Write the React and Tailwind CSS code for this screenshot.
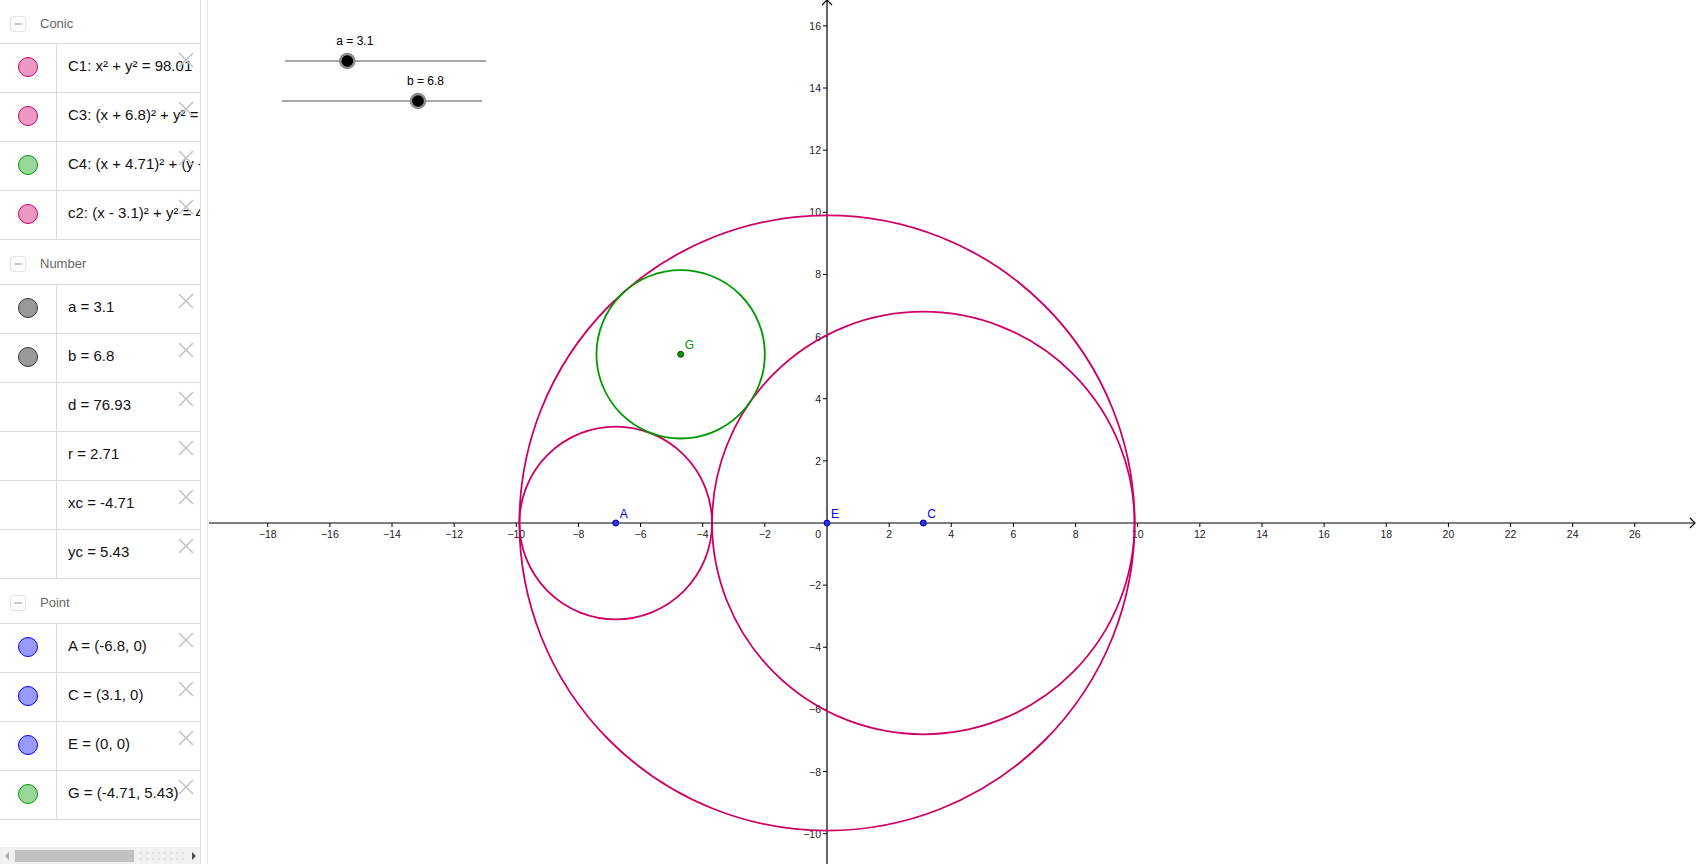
import React from 'react';

// graphics view scale: one unit = 31.07px, origin in page pixels
const U = 31.07;
const OX = 827;
const OY = 523;
const px = (x) => OX + x * U;
const py = (y) => OY - y * U;

const PINK = '#cc0066';
const GREEN = '#009900';
const BLUE = '#0000ff';

const markers = {
  pink: 'bg-[#eb99c2] border-[#cc0066]',
  green: 'bg-[#99d699] border-[#009900]',
  gray: 'bg-[#999999] border-[#333333]',
  blue: 'bg-[#9999ff] border-[#0000ff]',
};

const sections = [
  {
    title: 'Conic',
    first: true,
    rows: [
      { m: 'pink', t: 'C1: x² + y² = 98.01' },
      { m: 'pink', t: 'C3: (x + 6.8)² + y² = 9.61' },
      { m: 'green', t: 'C4: (x + 4.71)² + (y - 5.43)² = 7.34' },
      { m: 'pink', t: 'c2: (x - 3.1)² + y² = 46.24' },
    ],
  },
  {
    title: 'Number',
    rows: [
      { m: 'gray', t: 'a = 3.1' },
      { m: 'gray', t: 'b = 6.8' },
      { t: 'd = 76.93' },
      { t: 'r = 2.71' },
      { t: 'xc = -4.71' },
      { t: 'yc = 5.43' },
    ],
  },
  {
    title: 'Point',
    rows: [
      { m: 'blue', t: 'A = (-6.8, 0)' },
      { m: 'blue', t: 'C = (3.1, 0)' },
      { m: 'blue', t: 'E = (0, 0)' },
      { m: 'green', t: 'G = (-4.71, 5.43)' },
    ],
  },
];

const CloseIcon = () => (
  <svg width="16" height="16" viewBox="0 0 16 16" className="absolute right-[6px] top-[8px]">
    <line x1="1" y1="1" x2="15" y2="15" stroke="#c4c4c4" strokeWidth="1.6" />
    <line x1="15" y1="1" x2="1" y2="15" stroke="#c4c4c4" strokeWidth="1.6" />
  </svg>
);

const SectionHeader = ({ title, first }) => (
  <div
    className={`flex items-center border-b border-[#dcdcdc] pt-[4px] ${first ? 'h-[44px]' : 'h-[45px]'}`}
  >
    <div className="ml-[10px] w-[16px] h-[16px] border border-[#e2e2e2] rounded-[3px] flex items-center justify-center">
      <div className="w-[8px] h-[2px] bg-[#c8c8c8]" />
    </div>
    <span className="ml-[14px] text-[13px] text-[#666666]">{title}</span>
  </div>
);

const Row = ({ m, t }) => (
  <div className="relative flex h-[49px] border-b border-[#dcdcdc]">
    <div className="w-[57px] shrink-0 border-r border-[#dcdcdc] flex items-center justify-center pb-[3px]">
      {m && <div className={`w-[20px] h-[20px] rounded-full border ${markers[m]}`} />}
    </div>
    <div className="flex items-center pl-[11px] pb-[3px] whitespace-nowrap overflow-hidden text-[15px] text-[#111111]">
      {t}
    </div>
    <CloseIcon />
  </div>
);

const Scrollbar = () => (
  <div className="h-[17px] bg-[#f0f0f0] flex items-center relative">
    <div className="ml-[5px] w-0 h-0 border-y-[4px] border-y-transparent border-r-[4px] border-r-[#a8a8a8]" />
    <div className="ml-[6px] w-[119px] h-[12px] bg-[#c1c1c1]" />
    <div className="flex-1 h-[12px] mx-[4px] bg-[radial-gradient(#e2e2e2_1px,transparent_1px)] bg-[length:6px_6px]" />
    <div className="mr-[4px] w-0 h-0 border-y-[4px] border-y-transparent border-l-[4px] border-l-[#505050]" />
  </div>
);

const Sidebar = () => (
  <div className="w-[201px] shrink-0 h-full border-r border-[#dcdcdc] flex flex-col bg-white overflow-hidden">
    {sections.map((s) => (
      <div key={s.title}>
        <SectionHeader title={s.title} first={s.first} />
        {s.rows.map((r) => (
          <Row key={r.t} m={r.m} t={r.t} />
        ))}
      </div>
    ))}
    <div className="flex-1" />
    <Scrollbar />
  </div>
);

const Slider = ({ x1, x2, y, value, label }) => {
  const kx = x1 + (x2 - x1) * (value / 10);
  return (
    <g>
      <line x1={x1} y1={y} x2={x2} y2={y} stroke="#8a8a8a" strokeWidth="1.3" />
      <circle cx={kx} cy={y} r="8.3" fill="#8c8c8c" />
      <circle cx={kx} cy={y} r="5.8" fill="#000" />
      <text x={kx - 11} y={y - 16} fontSize="12" fill="#000">
        {label}
      </text>
    </g>
  );
};

const Point = ({ x, y, fill, stroke, label, color }) => (
  <g>
    <circle cx={px(x)} cy={py(y)} r="3" fill={fill} stroke={stroke} strokeWidth="1" />
    <text x={px(x) + 4} y={py(y) - 5} fontSize="12" fill={color}>
      {label}
    </text>
  </g>
);

const Graphics = () => {
  const xTicks = [];
  for (let v = -18; v <= 26; v += 2) if (v !== 0) xTicks.push(v);
  const yTicks = [];
  for (let v = -10; v <= 16; v += 2) if (v !== 0) yTicks.push(v);
  const fmt = (v) => (v < 0 ? '\u2212' + Math.abs(v) : String(v));

  return (
    <div className="flex-1 h-full bg-white overflow-hidden">
      <svg
        width="1490"
        height="864"
        viewBox="208 0 1490 864"
        style={{ fontFamily: '"Liberation Sans", Arial, sans-serif' }}
      >
        {/* axes */}
        <line x1="209" y1={OY} x2="1695" y2={OY} stroke="#000" strokeWidth="1.2" />
        <polyline points={`1690,${OY - 5} 1695,${OY} 1690,${OY + 5}`} fill="none" stroke="#000" strokeWidth="1.2" />
        <line x1={OX} y1="0" x2={OX} y2="864" stroke="#000" strokeWidth="1.2" />
        <polyline points={`${OX - 5},5 ${OX},0 ${OX + 5},5`} fill="none" stroke="#000" strokeWidth="1.2" />

        {xTicks.map((v) => (
          <g key={'x' + v}>
            <line x1={px(v)} y1={OY} x2={px(v)} y2={OY + 4} stroke="#000" strokeWidth="1" />
            <text x={px(v)} y={OY + 15} fontSize="10.5" fill="#222" textAnchor="middle">
              {fmt(v)}
            </text>
          </g>
        ))}
        {yTicks.map((v) => (
          <g key={'y' + v}>
            <line x1={OX - 4} y1={py(v)} x2={OX} y2={py(v)} stroke="#000" strokeWidth="1" />
            <text x={OX - 6} y={py(v) + 4} fontSize="10.5" fill="#222" textAnchor="end">
              {fmt(v)}
            </text>
          </g>
        ))}
        <text x={OX - 6} y={OY + 15} fontSize="10.5" fill="#222" textAnchor="end">
          0
        </text>

        {/* conics */}
        <circle cx={px(0)} cy={py(0)} r={9.9 * U} fill="none" stroke={PINK} strokeWidth="1.8" />
        <circle cx={px(-6.8)} cy={py(0)} r={3.1 * U} fill="none" stroke={PINK} strokeWidth="1.8" />
        <circle cx={px(3.1)} cy={py(0)} r={6.8 * U} fill="none" stroke={PINK} strokeWidth="1.8" />
        <circle cx={px(-4.71)} cy={py(5.43)} r={2.71 * U} fill="none" stroke={GREEN} strokeWidth="1.8" />

        {/* points */}
        <Point x={-6.8} y={0} fill="#3030ff" stroke="#00008a" label="A" color={BLUE} />
        <Point x={0} y={0} fill="#3030ff" stroke="#00008a" label="E" color={BLUE} />
        <Point x={3.1} y={0} fill="#3030ff" stroke="#00008a" label="C" color={BLUE} />
        <Point x={-4.71} y={5.43} fill={GREEN} stroke="#1f3f1f" label="G" color={GREEN} />

        {/* sliders */}
        <Slider x1={285} x2={486} y={61} value={3.1} label="a = 3.1" />
        <Slider x1={282} x2={482} y={101} value={6.8} label="b = 6.8" />
      </svg>
    </div>
  );
}

export default function App() {
  return (
    <div
      className="w-[1698px] h-[864px] flex bg-white overflow-hidden"
      style={{ fontFamily: '"Liberation Sans", Arial, sans-serif' }}
    >
      <Sidebar />
      <div className="w-[7px] shrink-0 h-full bg-white border-r border-[#e6e6e6]" />
      <Graphics />
    </div>
  );
}
